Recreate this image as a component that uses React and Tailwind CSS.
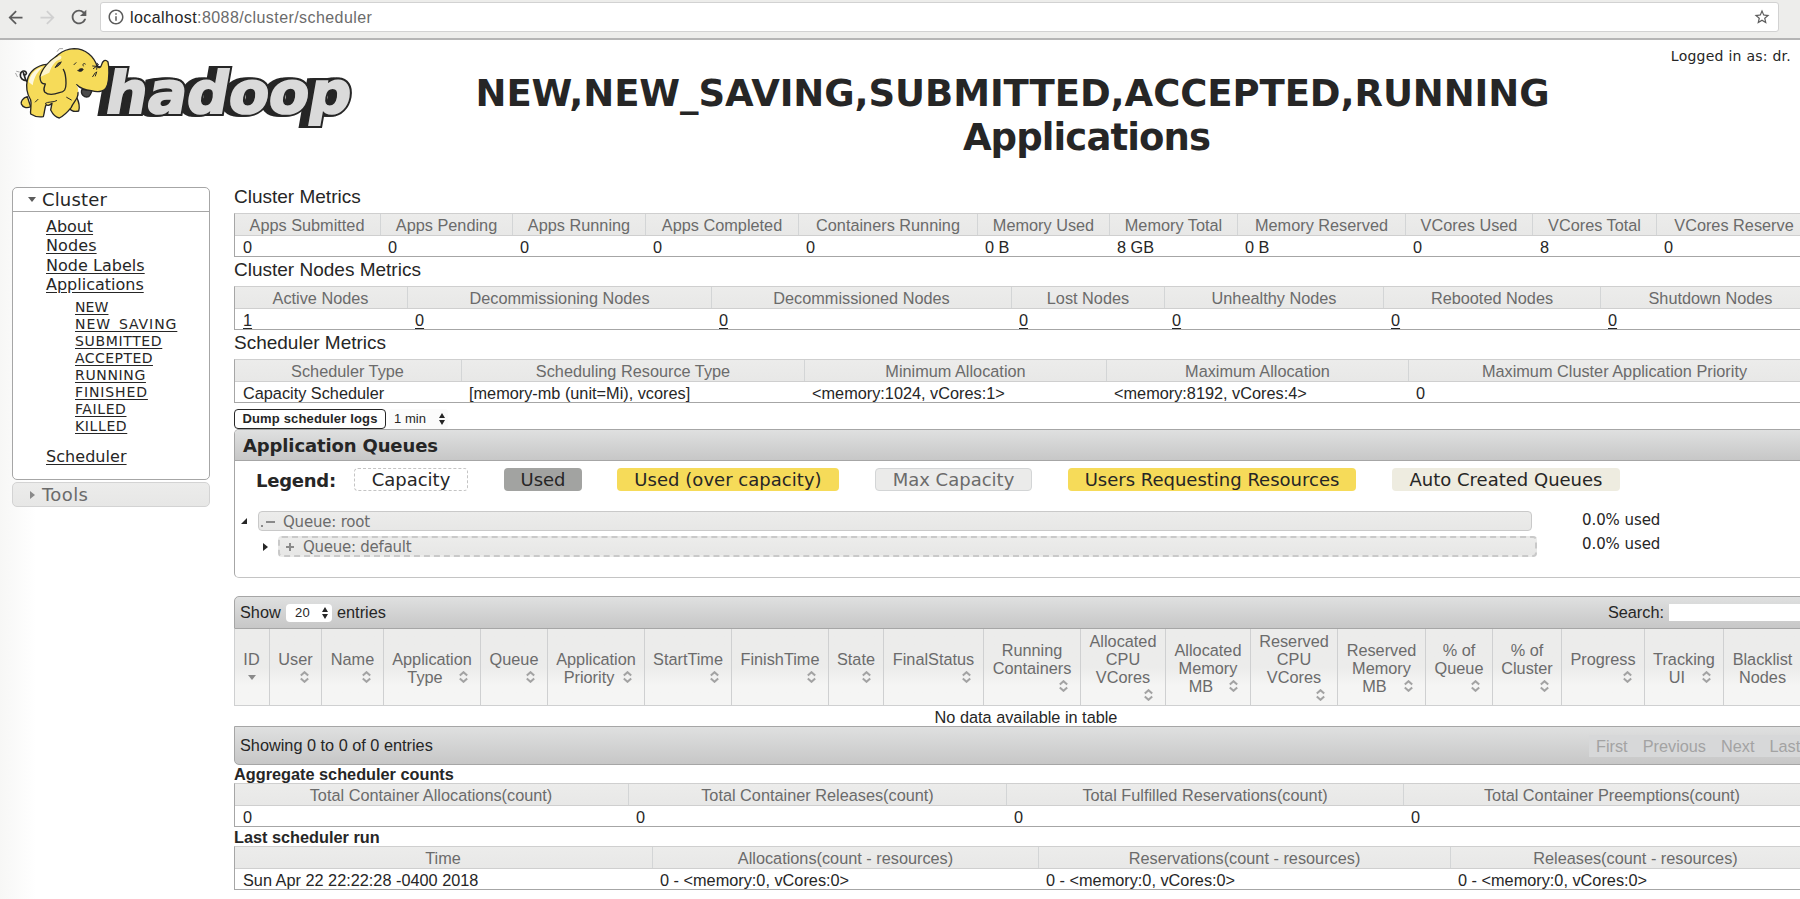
import React from "react";
import { MdArrowBack, MdArrowForward, MdRefresh, MdInfoOutline, MdStarBorder } from "react-icons/md";

const SANS = "font-['Liberation_Sans',Arial,sans-serif]";
const VERDANA = "font-['DejaVu_Sans',Verdana,sans-serif]";

const clusterMetrics = [
  ["Apps Submitted", "0", "w-[147px]"],
  ["Apps Pending", "0", "w-[132px]"],
  ["Apps Running", "0", "w-[133px]"],
  ["Apps Completed", "0", "w-[153px]"],
  ["Containers Running", "0", "w-[179px]"],
  ["Memory Used", "0 B", "w-[132px]"],
  ["Memory Total", "8 GB", "w-[128px]"],
  ["Memory Reserved", "0 B", "w-[168px]"],
  ["VCores Used", "0", "w-[127px]"],
  ["VCores Total", "8", "w-[124px]"],
  ["VCores Reserve", "0", "w-[155px]"],
];

const nodeMetrics = [
  ["Active Nodes", "1", "w-[174px]"],
  ["Decommissioning Nodes", "0", "w-[304px]"],
  ["Decommissioned Nodes", "0", "w-[300px]"],
  ["Lost Nodes", "0", "w-[153px]"],
  ["Unhealthy Nodes", "0", "w-[219px]"],
  ["Rebooted Nodes", "0", "w-[217px]"],
  ["Shutdown Nodes", "0", "w-[220px]"],
];

const schedulerMetrics = [
  ["Scheduler Type", "Capacity Scheduler", "w-[228px]"],
  ["Scheduling Resource Type", "[memory-mb (unit=Mi), vcores]", "w-[343px]"],
  ["Minimum Allocation", "<memory:1024, vCores:1>", "w-[302px]"],
  ["Maximum Allocation", "<memory:8192, vCores:4>", "w-[302px]"],
  ["Maximum Cluster Application Priority", "0", "w-[412px]"],
];

const aggregateCounts = [
  ["Total Container Allocations(count)", "0", "w-[395px]"],
  ["Total Container Releases(count)", "0", "w-[378px]"],
  ["Total Fulfilled Reservations(count)", "0", "w-[397px]"],
  ["Total Container Preemptions(count)", "0", "w-[417px]"],
];

const lastRun = [
  ["Time", "Sun Apr 22 22:22:28 -0400 2018", "w-[419px]"],
  ["Allocations(count - resources)", "0 - <memory:0, vCores:0>", "w-[386px]"],
  ["Reservations(count - resources)", "0 - <memory:0, vCores:0>", "w-[412px]"],
  ["Releases(count - resources)", "0 - <memory:0, vCores:0>", "w-[370px]"],
];

const appColumns = [
  [["ID"], "w-[36px]", "down"],
  [["User"], "w-[52px]", "below"],
  [["Name"], "w-[62px]", "below"],
  [["Application", "Type"], "w-[97px]", "inline"],
  [["Queue"], "w-[67px]", "below"],
  [["Application", "Priority"], "w-[97px]", "inline"],
  [["StartTime"], "w-[87px]", "below"],
  [["FinishTime"], "w-[97px]", "below"],
  [["State"], "w-[55px]", "below"],
  [["FinalStatus"], "w-[100px]", "below"],
  [["Running", "Containers"], "w-[97px]", "below"],
  [["Allocated", "CPU", "VCores"], "w-[85px]", "below"],
  [["Allocated", "Memory", "MB"], "w-[85px]", "inline"],
  [["Reserved", "CPU", "VCores"], "w-[87px]", "below"],
  [["Reserved", "Memory", "MB"], "w-[88px]", "inline"],
  [["% of", "Queue"], "w-[67px]", "below"],
  [["% of", "Cluster"], "w-[69px]", "below"],
  [["Progress"], "w-[83px]", "below"],
  [["Tracking", "UI"], "w-[79px]", "inline"],
  [["Blacklist", "Nodes"], "w-[78px]", "none"],
];

const appStates = [
  ["NEW", "tracking-[0.1px]"],
  ["NEW_SAVING", "tracking-[0.93px]"],
  ["SUBMITTED", "tracking-[0.65px]"],
  ["ACCEPTED", "tracking-[0.45px]"],
  ["RUNNING", "tracking-[0.65px]"],
  ["FINISHED", "tracking-[0.88px]"],
  ["FAILED", "tracking-[0.6px]"],
  ["KILLED", "tracking-[0.62px]"],
];

function BrowserBar() {
  return (
    <div className="flex h-[40px] items-start border-b-2 border-[#b5b5b5] bg-[#ededeb] pt-[2px]">
      <div className="flex h-[30px] w-[100px] shrink-0 items-center pl-[5px]">
        <MdArrowBack size={21} color="#5c5c5c" />
        <MdArrowForward size={21} color="#d0d0d0" className="ml-[11px]" />
        <MdRefresh size={22} color="#5c5c5c" className="ml-[10px]" />
      </div>
      <div className="flex h-[30px] w-[1679px] items-center rounded-[3px] border border-[#d2d2d2] bg-white pl-[6px] pr-[7px]">
        <MdInfoOutline size={18} color="#5c5c5c" />
        <div className={`${SANS} ml-[5px] flex-1 pt-[2px] text-[16px] leading-[28px] tracking-[0.43px] text-[#6b6b6b]`}>
          <span className="text-[#262626]">localhost</span>:8088/cluster/scheduler
        </div>
        <MdStarBorder size={18} color="#5c5c5c" />
      </div>
    </div>
  );
}

function Logo() {
  const word = {
    y: 0,
    textLength: 735,
    lengthAdjust: "spacingAndGlyphs",
    fontFamily: "'DejaVu Sans', sans-serif",
    fontWeight: 700,
    fontSize: 174,
    strokeLinejoin: "miter",
  };
  return (
    <svg width="360" height="110" viewBox="0 120 1080 330" className="block">
      <g transform="translate(300 338) skewX(-10)">
        <g fill="#262626" stroke="#262626" strokeWidth="18">
          <text {...word} x={-12}>hadoop</text>
          <text {...word} x={-4}>hadoop</text>
          <text {...word} x={4}>hadoop</text>
          <text {...word} x={10}>hadoop</text>
        </g>
        <text {...word} x={10} fill="#dadada" stroke="#dadada" strokeWidth="6">hadoop</text>
      </g>
      <g transform="translate(30 126)" fill="#f6db59" stroke="#262626" strokeWidth="4" strokeLinecap="round" strokeLinejoin="round">
        <path d="M50 118C44 112 44 100 40 92M50 116C38 116 30 108 31 98C32 88 42 84 48 90C52 95 45 102 41 98" fill="none" strokeWidth="5" />
        <path d="M22 104L17 94M28 90L20 88M142 28L148 20L158 20" fill="none" stroke="#a5a5a5" strokeWidth="3" />
        <path d="M52 164C38 168 32 178 34 186C38 196 50 200 62 194Z" />
        <path d="M176 196C182 206 194 210 206 207C210 194 206 178 200 166L182 170Z" />
        <path d="M110 67C80 70 58 88 52 114C47 136 52 158 62 174C66 188 60 204 62 216C74 224 88 226 100 224C104 210 104 198 108 188C114 192 120 190 126 184L122 204C128 216 136 226 148 228C160 222 176 206 184 196C190 180 206 170 204 152L160 80Z" />
        <path d="M216 142C210 156 222 168 236 164C242 160 244 150 246 146Z" fill="#4b4b4b" />
        <path d="M112 84C126 52 150 22 192 20C226 20 252 42 262 74C266 78 272 78 274 70C278 56 286 50 294 60C298 76 298 108 292 130C286 148 266 152 244 146C226 144 208 136 200 128L150 140Z" />
        <path d="M204 150C206 140 202 132 196 124L166 130L150 150L180 168Z" stroke="none" />
        <path d="M140 42C118 56 94 82 90 104C90 118 96 126 106 126C104 134 98 142 104 150C114 160 132 158 148 152C164 150 168 142 168 124C168 106 166 92 160 82" />
        <path d="M92 104C100 80 118 56 146 42C152 40 158 44 152 52C136 56 126 70 118 92Z" fill="#fff" stroke="none" opacity="0.7" />
        <path d="M56 120C60 96 78 78 100 74C84 86 72 104 68 130Z" fill="#fff" stroke="none" opacity="0.8" />
        <path d="M136 76L144 64L154 60M136 76C144 72 150 70 152 62" fill="#4b4b4b" strokeWidth="3" />
        <path d="M192 68L198 62M220 72C216 66 222 62 226 66M248 72L272 74M250 80L266 68M262 64L260 82" fill="none" strokeWidth="3" />
        <path d="M204 86C208 78 218 78 220 82C216 90 210 90 204 86Z" fill="#262626" strokeWidth="2" />
        <path d="M248 104L256 92M256 102L260 90M76 180L84 172M106 184C112 178 132 182 140 176M170 166L184 174" fill="none" strokeWidth="3" />
      </g>
    </svg>
  );
}

function Sidebar() {
  return (
    <div className={`${VERDANA} ml-[12px] mt-[187px] w-[198px] shrink-0 text-[#262626]`}>
      <div className="h-[293px] rounded-[5px] border border-[#a6a6a6] bg-white">
        <div className="flex h-[24px] items-center border-b border-[#a6a6a6] pl-[15px] text-[18px] leading-[22px]">
          <svg width="8" height="5" className="mr-[6px]"><path d="M0 0H8L4 5Z" fill="#5c5c5c" /></svg>
          <span className="tracking-[0.15px]">Cluster</span>
        </div>
        <div className="flex flex-col items-start pl-[33px] pt-[5px] text-[16px] leading-[19.4px]">
          <a className="tracking-[-0.05px] underline underline-offset-2">About</a>
          <a className="tracking-[0.1px] underline underline-offset-2">Nodes</a>
          <a className="tracking-[0.03px] underline underline-offset-2">Node Labels</a>
          <a className="tracking-[0px] underline underline-offset-2">Applications</a>
          <div className="mb-[12px] mt-[4px] flex flex-col items-start pl-[29px] text-[14px] leading-[17.1px]">
            {appStates.map(([name, spacing]) => (
              <a key={name} className={`${spacing} underline underline-offset-2`}>{name}</a>
            ))}
          </div>
          <a className="tracking-[0.05px] underline underline-offset-2">Scheduler</a>
        </div>
      </div>
      <div className="mt-[2px] flex h-[25px] items-center rounded-[5px] border border-[#d3d3d3] bg-linear-to-b from-[#ececeb] to-[#e7e7e6] pl-[17px] text-[18px] text-[#6b6b6b]">
        <svg width="5" height="8" className="mr-[7px]"><path d="M0 0V8L5 4Z" fill="#8a8a8a" /></svg>
        <span className="tracking-[0.4px]">Tools</span>
      </div>
    </div>
  );
}

function MetricsTable({ columns, linked }) {
  return (
    <div className="h-[44px] w-[1586px] border-l border-t border-[#a6a6a6] border-t-[#cfcfcf] text-[16.3px]">
      <div className="flex h-[22px] border-b border-[#cfcfcf] bg-linear-to-b from-[#ececeb] to-[#e8e8e7]">
        {columns.map(([label, , width]) => (
          <div key={label} className={`${width} shrink-0 whitespace-nowrap border-r border-[#d3d5d6] text-center leading-[22px] text-[#6b6b6b] first:-ml-px`}>
            {label}
          </div>
        ))}
      </div>
      <div className="flex h-[21px] border-b border-[#a6a6a6] bg-white">
        {columns.map(([label, value, width]) => (
          <div key={label} className={`${width} shrink-0 whitespace-nowrap pl-[7px] leading-[22px] first:-ml-px first:pl-[9px]`}>
            <span className={linked ? "underline underline-offset-2" : ""}>{value}</span>
          </div>
        ))}
      </div>
    </div>
  );
}

function SectionTitle({ children }) {
  return <h2 className="h-[29px] text-[19px] leading-[26px]">{children}</h2>;
}

function SelectArrows() {
  return (
    <svg width="6" height="12" viewBox="0 0 6 12"><path d="M0 5L3 0L6 5ZM0 7L3 12L6 7Z" fill="#262626" /></svg>
  );
}

function SortArrows() {
  return (
    <svg width="9" height="12" viewBox="0 0 9 12" fill="none" stroke="#a3a3a3" strokeWidth="2">
      <path d="M0.8 4.6L4.5 1.2L8.2 4.6M0.8 7.4L4.5 10.8L8.2 7.4" />
    </svg>
  );
}

function ColumnHeader({ lines, width, sort }) {
  const rows = sort === "inline" ? lines.slice(0, -1) : lines;
  return (
    <div className={`${width} flex shrink-0 flex-col justify-center whitespace-nowrap border-r border-[#cfd0d1] pt-[2px] text-center leading-[18.1px] first:-ml-px`}>
      {rows.map((line) => <div key={line}>{line}</div>)}
      {sort === "inline" && (
        <div className="flex h-[18px] items-center justify-end pr-[12px]">
          <span className="flex-1 pl-[7px] text-center">{lines[lines.length - 1]}</span>
          <SortArrows />
        </div>
      )}
      {sort === "below" && <div className="flex h-[18px] items-center justify-end pr-[12px]"><SortArrows /></div>}
      {sort === "down" && (
        <div className="flex h-[18px] items-center justify-center">
          <svg width="8" height="5"><path d="M0 0H8L4 5Z" fill="#8a8a8a" /></svg>
        </div>
      )}
    </div>
  );
}

function QueuePanel() {
  const chip = "flex h-[23px] items-center justify-center rounded-[4px] whitespace-nowrap";
  return (
    <div className={`${VERDANA} h-[149px] w-[1586px] rounded-l-[5px] border border-[#a6a6a6] border-b-[#c4c4c4] bg-white`}>
      <div className="h-[31px] rounded-tl-[4px] border-b border-[#a6a6a6] bg-linear-to-b from-[#dfe0e0] to-[#c7c7c7] pl-[8px] text-[18px] font-bold leading-[31px] tracking-[-0.13px]">
        Application Queues
      </div>
      <div className="flex pl-[21px] pt-[7px] text-[18px] leading-[25px]">
        <span className="h-[23px] w-[98px] font-bold tracking-[-0.25px]">Legend:</span>
        <span className={`${chip} w-[114px] border border-dashed border-[#c4c4c4]`}>Capacity</span>
        <span className={`${chip} ml-[36px] w-[78px] bg-[#a2a3a1]`}>Used</span>
        <span className={`${chip} ml-[35px] w-[222px] bg-[#f6db59] tracking-[0.03px]`}>Used (over capacity)</span>
        <span className={`${chip} ml-[36px] w-[157px] border border-[#d3d5d6] bg-[#ebebea] text-[#6b6b6b]`}>Max Capacity</span>
        <span className={`${chip} ml-[36px] w-[288px] bg-[#f6db59]`}>Users Requesting Resources</span>
        <span className={`${chip} ml-[36px] w-[228px] bg-[#eeece0]`}>Auto Created Queues</span>
      </div>
      <div className="mt-[20px] flex h-[20px] items-center pl-[6px] text-[15px]">
        <svg width="6" height="6" className="mr-[11px]"><path d="M6 0V6H0Z" fill="#262626" /></svg>
        <div className="flex h-[20px] w-[1274px] items-center rounded-[4px] border border-[#c9c9c9] bg-linear-to-b from-[#ececeb] to-[#e7e7e6] pl-[2px] pt-[2px] text-[#6b6b6b]">
          <svg width="14" height="12" className="mr-[8px]"><path d="M0 9H2V11H0ZM5 5H14V7H5Z" fill="#8a8a8a" /></svg>
          <span className="tracking-[-0.2px]">Queue: root</span>
        </div>
        <span className="-mt-[2px] ml-[50px] tracking-[-0.08px]">0.0% used</span>
      </div>
      <div className="mt-[5px] flex h-[21px] items-center pl-[28px] text-[15px]">
        <svg width="5" height="8" className="mr-[10px]"><path d="M0 0L5 4L0 8Z" fill="#262626" /></svg>
        <div className="flex h-[21px] w-[1259px] items-center rounded-[4px] border-2 border-dashed border-[#c9c9c9] bg-linear-to-b from-[#ececeb] to-[#e7e7e6] pl-[5px] pt-px text-[#6b6b6b]">
          <svg width="10" height="10" className="mr-[8px]"><path d="M4 1H6V4H9V6H6V9H4V6H1V4H4Z" fill="#8a8a8a" /></svg>
          <span className="tracking-[-0.25px]">Queue: default</span>
        </div>
        <span className="-mt-[4px] ml-[45px] tracking-[-0.08px]">0.0% used</span>
      </div>
    </div>
  );
}

function ApplicationsTable() {
  return (
    <div className="mt-[18px] w-[1586px] text-[16.3px]">
      <div className="flex h-[33px] items-center rounded-tl-[5px] border border-[#a6a6a6] bg-linear-to-b from-[#dfe0e0] to-[#c7c7c7] pb-px pl-[5px]">
        <span className="w-[46px]">Show</span>
        <span className="mt-px flex h-[18px] w-[46px] items-center justify-between rounded-[4px] bg-white pl-[9px] pr-[4px] text-[13px] tracking-[0.3px]">20<SelectArrows /></span>
        <span className="ml-[5px]">entries</span>
        <span className="ml-[1222px]">Search:</span>
        <span className="ml-[5px] h-[17px] flex-1 bg-white" />
      </div>
      <div className="flex h-[77px] border-b border-l border-[#cfd0d1] bg-linear-to-b from-[#ececeb] from-50% to-[#f5f5f4] to-75% text-[#6b6b6b]">
        {appColumns.map(([lines, width, sort], i) => (
          <ColumnHeader key={i} lines={lines} width={width} sort={sort} />
        ))}
      </div>
      <div className="h-[20px] pr-[2px] text-center leading-[23px]">No data available in table</div>
      <div className="flex h-[39px] items-center rounded-bl-[5px] border border-[#a6a6a6] bg-linear-to-b from-[#dfe0e0] to-[#c7c7c7] pl-[5px]">
        <span className="w-[1349px]">Showing 0 to 0 of 0 entries</span>
        <div className="flex h-[22px] flex-1 items-center gap-[15px] bg-[#d7d8d9] pl-[7px] leading-[22px] text-[#a3a3a3]">
          <span>First</span><span>Previous</span><span>Next</span><span>Last</span>
        </div>
      </div>
    </div>
  );
}

export default function App() {
  return (
    <div className={`${SANS} h-[899px] w-[1800px] overflow-hidden bg-white text-[#262626]`}>
      <BrowserBar />
      <div className="-mt-[40px] flex h-[899px] bg-linear-to-r from-[#f7f7f6] to-white to-[36px] [clip-path:inset(40px_0_0_0)]">
        <Sidebar />
        <div className="ml-[24px] w-[1566px] shrink-0">
          <header className="relative h-[184px]">
            <div className="absolute -left-[234px] top-[40px]"><Logo /></div>
            <div className={`${VERDANA} absolute right-[9px] top-[47px] text-[14px] leading-[18px] tracking-[0.25px]`}>Logged in as: dr.</div>
            <h1 className={`${VERDANA} pl-[159px] pr-[168px] pt-[72px] text-center text-[37px] font-bold leading-[44.3px] tracking-[-0.08px]`}>
              <span className="block whitespace-nowrap">NEW,NEW_SAVING,SUBMITTED,ACCEPTED,RUNNING</span>
              <span className="block pl-[148px] tracking-[-0.9px]">Applications</span>
            </h1>
          </header>
          <SectionTitle>Cluster Metrics</SectionTitle>
          <MetricsTable columns={clusterMetrics} />
          <SectionTitle>Cluster Nodes Metrics</SectionTitle>
          <MetricsTable columns={nodeMetrics} linked />
          <SectionTitle>Scheduler Metrics</SectionTitle>
          <MetricsTable columns={schedulerMetrics} />
          <div className="flex h-[26px] items-end text-[13px]">
            <button className="h-[20px] w-[152px] whitespace-nowrap rounded-[4px] border border-[#262626] bg-white text-[13px] font-bold leading-[18px] tracking-[0.15px]">
              Dump scheduler logs
            </button>
            <div className="ml-[3px] flex h-[20px] items-center rounded-[3px] bg-[#fbfbfb] pl-[5px] pr-[3px]">
              <span className="w-[45px] tracking-[0.05px]">1 min</span><SelectArrows />
            </div>
          </div>
          <QueuePanel />
          <ApplicationsTable />
          <h3 className="h-[18px] text-[16.3px] font-bold leading-[19px]">Aggregate scheduler counts</h3>
          <MetricsTable columns={aggregateCounts} />
          <h3 className="h-[19px] text-[16.3px] font-bold leading-[20px]">Last scheduler run</h3>
          <MetricsTable columns={lastRun} />
        </div>
      </div>
    </div>
  );
}
